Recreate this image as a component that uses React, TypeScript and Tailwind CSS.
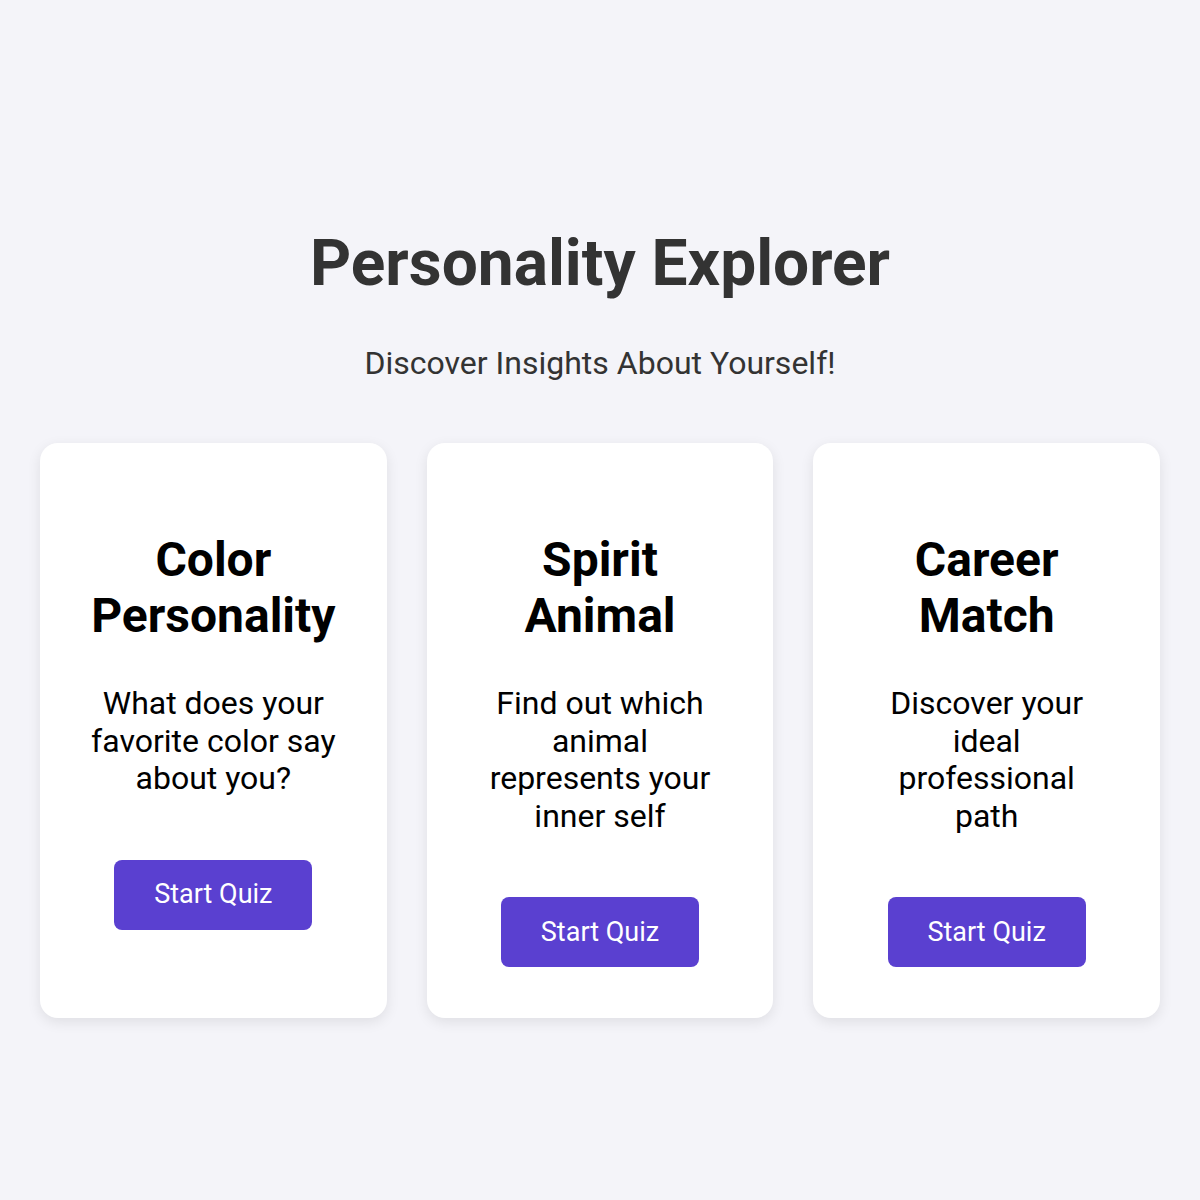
import React from 'react'

type Quiz = {
  title: string
  description: string
}

const quizzes: Quiz[] = [
  { title: 'Color Personality', description: 'What does your favorite color say about you?' },
  { title: 'Spirit Animal', description: 'Find out which animal represents your inner self' },
  { title: 'Career Match', description: 'Discover your ideal professional path' },
]

function QuizCard({ quiz }: { quiz: Quiz }) {
  return (
    <div className="bg-white rounded-[18px] shadow-[0_4px_14px_rgba(0,0,0,0.09)] px-[51px] pt-[89px] pb-[51px] flex flex-col items-center text-center">
      <h2 className="text-[48px] font-bold leading-[1.172] text-black">{quiz.title}</h2>
      <p className="mt-[41px] text-[32px] leading-[1.172] text-black">{quiz.description}</p>
      <button className="mt-[62px] h-[70px] px-[40px] rounded-[8px] bg-[#5a40d0] text-white text-[27px] leading-none">
        Start Quiz
      </button>
    </div>
  )
}

export default function App() {
  return (
    <div className="min-h-screen bg-[#f4f4f9] font-['Roboto',sans-serif] px-10 pt-[226px] pb-10">
      {/* Header */}
      <h1 className="text-center text-[64px] font-bold leading-[1.172] text-[#333]">Personality Explorer</h1>
      <p className="mt-[44px] text-center text-[32px] leading-[1.172] text-[#333]">
        Discover Insights About Yourself!
      </p>

      {/* Quiz cards */}
      <div className="mt-[60px] grid grid-cols-3 gap-10">
        {quizzes.map((quiz) => (
          <QuizCard key={quiz.title} quiz={quiz} />
        ))}
      </div>
    </div>
  )
}
